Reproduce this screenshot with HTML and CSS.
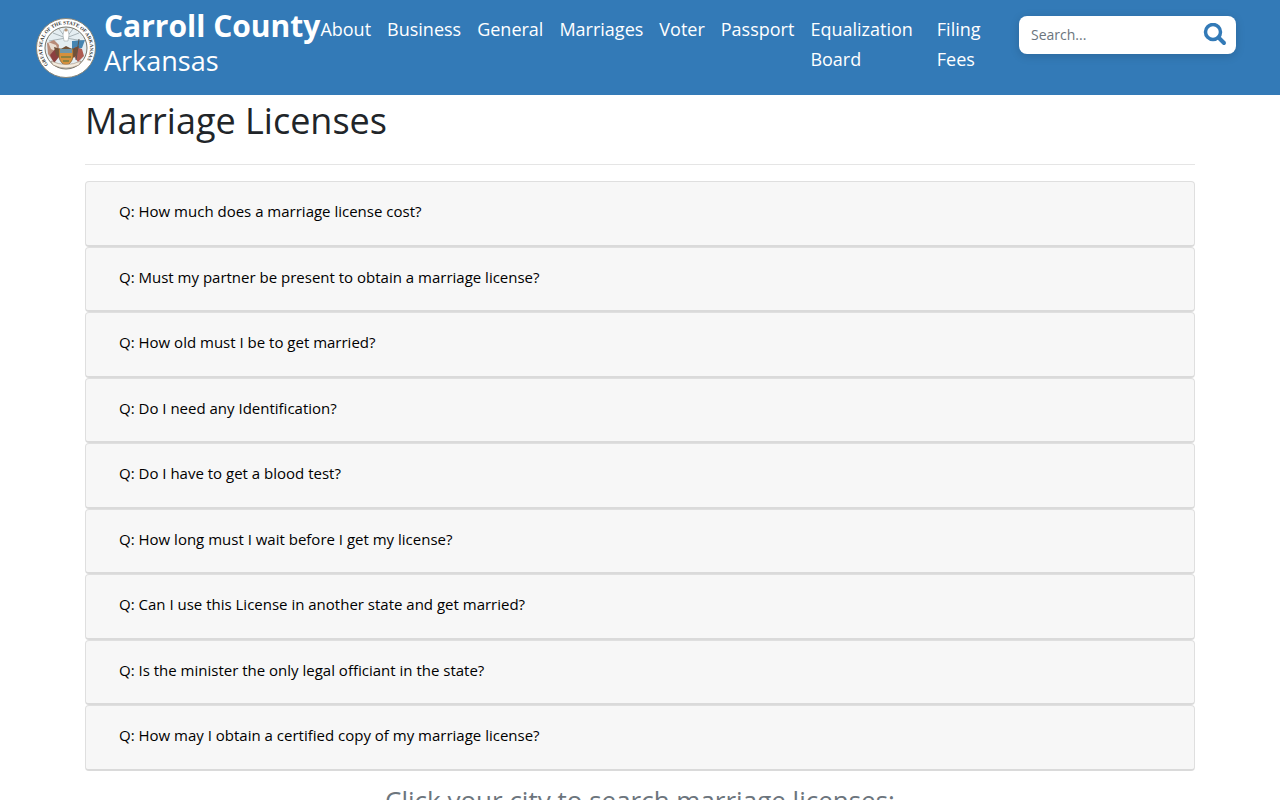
FILE: index.html
```html
<!DOCTYPE html>
<html lang="en">

<head>
    <meta charset="UTF-8">
    <meta name="viewport" content="width=device-width, initial-scale=1.0">
    <title>Marriage Licenses - Carroll County, Arkansas</title>
    <link rel="stylesheet" href="styles.css">
</head>

<body>
    <header class="navbar">
        <a class="brand" href="#">
            <svg class="seal" viewBox="0 0 60 60" role="img" aria-label="Great Seal of the State of Arkansas">
                <defs>
                    <path id="ring" d="M12.3 46.5 A24 24 0 1 1 47.7 46.5" />
                </defs>
                <circle cx="30" cy="30" r="29.5" fill="#fff" stroke="#8b8779" />
                <circle cx="30" cy="30" r="21" fill="#e5eef2" stroke="#777469" />
                <!-- Rays and goddess -->
                <path d="M30 20L17 15M30 20L23 11M30 20L30 9M30 20L37 11M30 20L43 15M30 20L13 23M30 20L47 23" stroke="#a7b3b8" stroke-width="1" />
                <path d="M28 12h4l1 5-1 6h-4l-1-6z" fill="#fff" stroke="#8e989c" stroke-width=".5" />
                <circle cx="30" cy="12" r="1.6" fill="#b79478" />
                <!-- Angel and sword -->
                <path d="M11 25l7-3 5 5-1 12-5 4-5-7z" fill="#b78b78" />
                <path d="M12 24l8 3 3 8-8-4z" fill="#e8ddd2" />
                <path d="M14 37l6-7 3 9-5 6z" fill="#8c3f3f" />
                <path d="M36 23l13-1-3 8-10 2z" fill="#4685b1" />
                <path d="M39 29l7 2 2 7-6 6-6-8z" fill="#ae5b51" />
                <path d="M43 21l-3 21" stroke="#555" />
                <!-- Eagle and shield -->
                <path d="M18 29l7 2 5-3 6 3 7-3-3 10-5 3h-9l-6-4z" fill="#715039" />
                <path d="M23 31h14v8q-1 6-7 9-6-3-7-9z" fill="#d6903c" stroke="#785b37" stroke-width=".7" />
                <path d="M24 31h12v4H24z" fill="#7196a9" />
                <path d="M25 39h10M27 43h6" stroke="#8c803f" stroke-width="2" />
                <path d="M15 43q15 7 30 0l-2 4q-13 6-26 0z" fill="#f4ecdf" stroke="#8d7763" stroke-width=".5" />
                <text class="seal-text"><textPath href="#ring">GREAT SEAL OF THE STATE OF ARKANSAS</textPath></text>
            </svg>
            <span class="brand-name"><strong>Carroll County</strong><span>Arkansas</span></span>
        </a>
        <nav class="menu">
            <a href="#">About</a>
            <a href="#">Business</a>
            <a href="#">General</a>
            <a href="#">Marriages</a>
            <a href="#">Voter</a>
            <a href="#">Passport</a>
            <a class="wide" href="#">Equalization<br>Board</a>
            <a href="#">Filing<br>Fees</a>
        </nav>
        <form class="search">
            <input type="text" placeholder="Search..." aria-label="Search">
            <button type="button" aria-label="Submit search">
                <svg viewBox="0 0 24 24" width="24" height="24">
                    <circle cx="10" cy="9" r="7.5" fill="none" stroke="#337ab7" stroke-width="3.5" />
                    <path d="M15.5 14.5l5.5 5.5" stroke="#337ab7" stroke-width="4" stroke-linecap="round" />
                </svg>
            </button>
        </form>
    </header>

    <main class="container">
        <h1>Marriage Licenses</h1>
        <hr>
        <div class="accordion">
            <div class="card"><button type="button">Q: How much does a marriage license cost?</button></div>
            <div class="card"><button type="button">Q: Must my partner be present to obtain a marriage license?</button></div>
            <div class="card"><button type="button">Q: How old must I be to get married?</button></div>
            <div class="card"><button type="button">Q: Do I need any Identification?</button></div>
            <div class="card"><button type="button">Q: Do I have to get a blood test?</button></div>
            <div class="card"><button type="button">Q: How long must I wait before I get my license?</button></div>
            <div class="card"><button type="button">Q: Can I use this License in another state and get married?</button></div>
            <div class="card"><button type="button">Q: Is the minister the only legal officiant in the state?</button></div>
            <div class="card"><button type="button">Q: How may I obtain a certified copy of my marriage license?</button></div>
        </div>
        <h2>Click your city to search marriage licenses:</h2>
    </main>
</body>

</html>
```
FILE: styles.css
```css
* {
    box-sizing: border-box;
}

body {
    margin: 0;
    font-family: "Open Sans", sans-serif;
    font-size: 15px;
    line-height: 1.5;
    color: #212529;
    background: #fff;
}

/* Header */
.navbar {
    display: flex;
    align-items: flex-start;
    padding: 8px 44px 17px 36px;
    background: #337ab7;
}

.brand {
    display: flex;
    flex-shrink: 0;
    gap: 8px;
    color: #fff;
    text-decoration: none;
}

.seal {
    width: 60px;
    height: 60px;
    margin-top: 10px;
}

.seal-text {
    font-family: "Liberation Serif", serif;
    font-size: 5px;
    font-weight: bold;
    fill: #333;
}

.brand-name {
    display: flex;
    flex-direction: column;
    font-size: 27px;
    line-height: 34px;
}

.brand-name strong {
    font-size: 30px;
    font-weight: 700;
    line-height: 36px;
}

.menu {
    display: flex;
    flex: 1;
    gap: 16px;
    padding-top: 6px;
}

.menu a {
    color: #fff;
    font-size: 18px;
    font-weight: 500;
    line-height: 30px;
    text-decoration: none;
}

.menu .wide {
    padding-right: 8px;
}

.search {
    display: flex;
    flex-shrink: 0;
    align-items: center;
    width: 217px;
    height: 38px;
    margin-top: 8px;
    border-radius: 8px;
    background: #fff;
    box-shadow: 0 2px 10px rgba(0, 0, 0, 0.15);
}

.search input {
    flex: 1;
    min-width: 0;
    padding: 0 12px 2px;
    border: 0;
    background: none;
    font: inherit;
    font-size: 14px;
}

.search input::placeholder {
    color: #6c757d;
}

.search button {
    display: flex;
    padding: 0 9px;
    border: 0;
    background: none;
}

/* Questions */
.container {
    max-width: 1140px;
    margin: 0 auto;
    padding: 0 15px;
}

h1 {
    margin: 0;
    font-size: 36px;
    font-weight: 400;
    line-height: 52px;
}

hr {
    margin: 17px 0 16px;
    border: 0;
    border-top: 1px solid #e5e5e5;
}

.card {
    padding: 12px 20px;
    border: 1px solid #dfdfdf;
    border-bottom: 2px solid #dadada;
    border-radius: 4px;
    background: #f7f7f7;
}

.card button {
    display: block;
    padding: 5px 12px 9px;
    border: 1px solid transparent;
    background: none;
    color: #000;
    font: inherit;
}

h2 {
    margin: 9px 0;
    color: #6c757d;
    font-size: 26px;
    font-weight: 400;
    line-height: 40px;
    text-align: center;
}
```
